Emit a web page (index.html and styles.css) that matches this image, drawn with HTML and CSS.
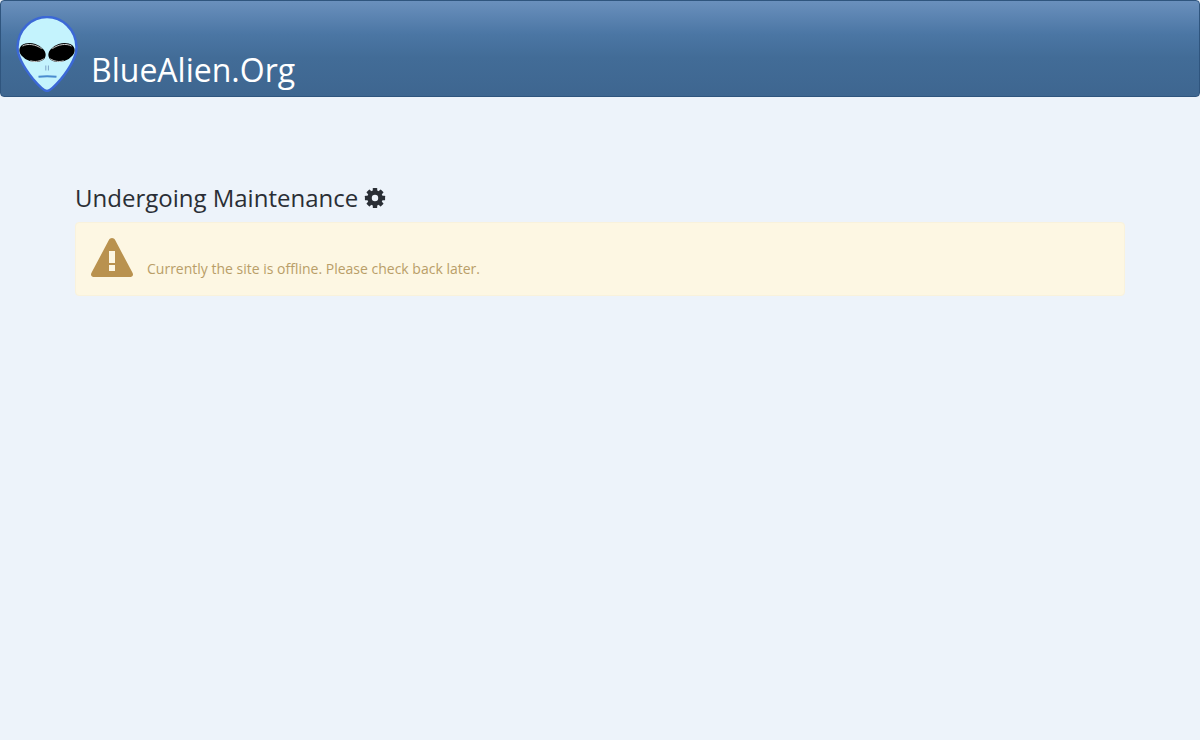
FILE: index.html
```html
<!DOCTYPE html>
<html lang="en">
<head>
<meta charset="utf-8">
<title>BlueAlien.Org</title>
<link rel="stylesheet" href="styles.css">
</head>
<body>
<header class="navbar">
  <svg class="logo" viewBox="0 0 62 76" width="62" height="76" aria-hidden="true">
    <path class="face" d="M31 1C16 1 2 13 1.500 31 1.300 41 9 53 17 63 23 70 28 75 31 75 34 75 39 70 45 63 53 53 60.700 41 60.500 31 60 13 46 1 31 1Z"/>
    <g transform="rotate(18 16.500 36.500)">
      <ellipse class="eye" cx="16.500" cy="36.500" rx="13.500" ry="9"/>
      <path class="glint" d="M5 33.500C9 29 17 27.800 24 30M17 45C22 45 26.500 42.500 29 39"/>
    </g>
    <g transform="rotate(-18 45.500 36.500)">
      <ellipse class="eye" cx="45.500" cy="36.500" rx="13.500" ry="9"/>
      <path class="glint" d="M38 30C45 27.800 53 29 57 33.500M33 39C35.500 42.500 40 45 45 45"/>
    </g>
    <path class="nose" d="M29.800 49.500v5M32.400 49.500v5"/>
    <path class="mouth" d="M22.500 60.800c5-.6 12-.6 18 0"/>
  </svg>
  <a class="brand" href="#">BlueAlien.Org</a>
</header>
<main class="container">
  <h2 class="title">Undergoing Maintenance
    <svg class="cog" viewBox="0 0 24 24" aria-hidden="true">
      <circle class="cog-ring" cx="12" cy="12" r="6"/>
      <g class="cog-teeth">
        <rect x="9.600" y="1" width="4.800" height="5" rx=".6"/>
        <rect x="9.600" y="1" width="4.800" height="5" rx=".6" transform="rotate(45 12 12)"/>
        <rect x="9.600" y="1" width="4.800" height="5" rx=".6" transform="rotate(90 12 12)"/>
        <rect x="9.600" y="1" width="4.800" height="5" rx=".6" transform="rotate(135 12 12)"/>
        <rect x="9.600" y="1" width="4.800" height="5" rx=".6" transform="rotate(180 12 12)"/>
        <rect x="9.600" y="1" width="4.800" height="5" rx=".6" transform="rotate(225 12 12)"/>
        <rect x="9.600" y="1" width="4.800" height="5" rx=".6" transform="rotate(270 12 12)"/>
        <rect x="9.600" y="1" width="4.800" height="5" rx=".6" transform="rotate(315 12 12)"/>
      </g>
    </svg>
  </h2>
  <div class="alert">
    <svg class="warn" viewBox="0 0 42 40" aria-hidden="true"><path fill-rule="evenodd" d="M21 0c1.300 0 2.400.7 3 1.800l17.500 33c.4.700.5 1.200.5 1.700 0 1.400-1.200 2.500-2.500 2.500h-37C1.200 39 0 37.900 0 36.500c0-.5.100-1 .5-1.700L18 1.800C18.600.7 19.700 0 21 0ZM18 13v12h6V13ZM18 27v6h6v-6Z"/></svg>
    <span class="msg">Currently the site is offline. Please check back later.</span>
  </div>
</main>
</body>
</html>
```
FILE: styles.css
```css
* { box-sizing: border-box; }
html, body { margin: 0; height: 100%; }
body {
  background: #edf3fa;
  font-family: "Open Sans", "Liberation Sans", sans-serif;
  font-size: 14px;
  line-height: 20px;
  color: #2a2e35;
}
.navbar {
  display: flex;
  align-items: flex-start;
  height: 97px;
  padding: 15px 0 0 15px;
  border: 1px solid #2f557e;
  border-radius: 4px;
  background: linear-gradient(to bottom, #6a90bd 0%, #4b76a4 35%, #426c97 60%, #3e6690 100%);
}
.logo { flex: none; display: block; }
.face { fill: #c4f3fd; stroke: #3b68d6; stroke-width: 2.5; }
.eye { fill: #000; }
.glint { fill: none; stroke: #e8e8e8; stroke-width: .8; }
.nose { fill: none; stroke: #7fa6c8; stroke-width: 1; }
.mouth { fill: none; stroke: #4a8ccf; stroke-width: 2; }
.brand {
  margin: 31px 0 0 13px;
  font-size: 32px;
  line-height: 46px;
  color: #fff;
  text-decoration: none;
}
.container { padding: 84px 75px 0; }
.title {
  display: flex;
  align-items: center;
  gap: 6px;
  margin: 0 0 7px;
  font-size: 24px;
  font-weight: 400;
  line-height: 34px;
}
.cog { width: 22px; height: 22px; }
.cog-ring { fill: none; stroke: #2a2e35; stroke-width: 5; }
.cog-teeth { fill: #2a2e35; }
.alert {
  display: flex;
  align-items: flex-end;
  height: 74px;
  padding: 15px;
  border: 1px solid #f9f2dc;
  border-radius: 4px;
  background: #fdf7e3;
  color: #b99e68;
}
.warn { flex: none; width: 42px; height: 40px; fill: #b9924f; margin-bottom: 2px; }
.msg { margin-left: 14px; margin-bottom: 1px; line-height: 20px; }
```
